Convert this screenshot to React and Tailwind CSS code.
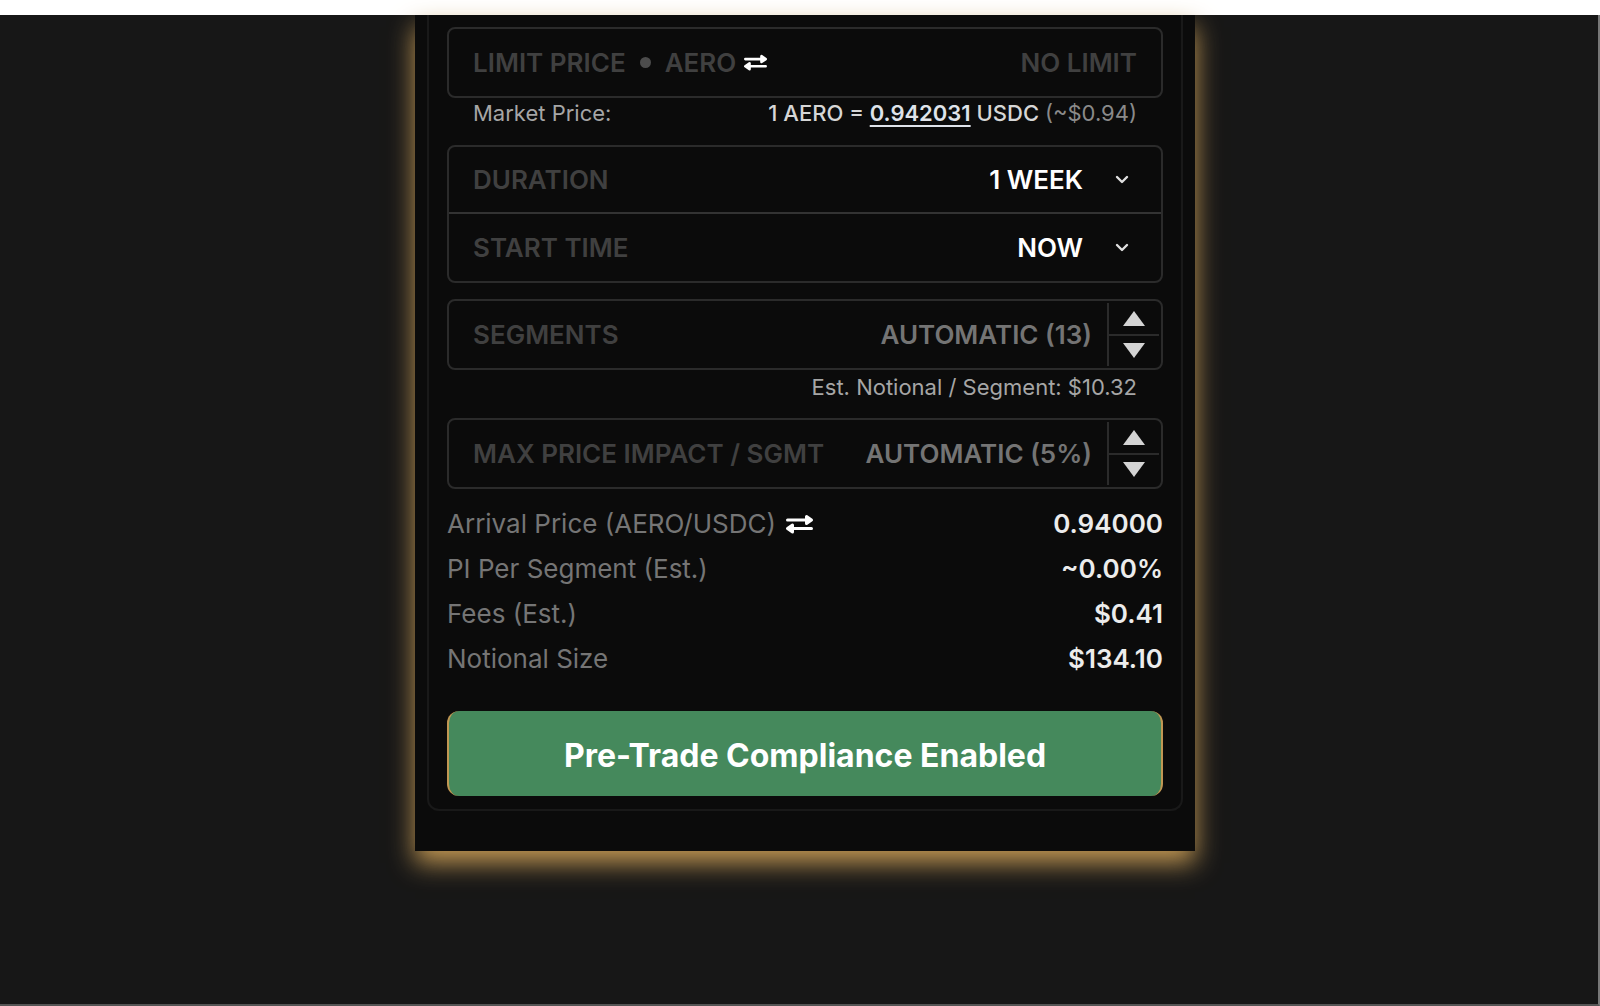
import { useState } from 'react';

const SwapIcon = ({ className }) => (
  <svg viewBox="0 0 27 20" className={className} fill="white" stroke="white" strokeLinejoin="round" strokeLinecap="round" aria-hidden="true">
    <path d="M1.5 6H20M7 14.5h18.5" strokeWidth="3" />
    <path d="M20.5 2.5v7l5-3.5zM6.5 11v7l-5-3.5z" strokeWidth="3" />
  </svg>
);

const Chevron = () => (
  <svg viewBox="0 0 14 9" className="pointer-events-none absolute right-8 h-[9px] w-3.5" fill="none" stroke="#e0e0e0" strokeWidth="2.4" strokeLinecap="round" strokeLinejoin="round" aria-hidden="true">
    <path d="M2 2l5 5 5-5" />
  </svg>
);

const SelectRow = ({ id, label, options }) => (
  <div className="relative flex h-[67px] items-center justify-between">
    <label htmlFor={id} className="pl-6 text-[#404040]">{label}</label>
    <select
      id={id}
      className="h-full grow appearance-none bg-transparent pr-[78px] text-right text-white outline-none [text-align-last:right]"
    >
      {options.map((option) => (
        <option key={option} className="bg-[#0b0b0b]">{option}</option>
      ))}
    </select>
    <Chevron />
  </div>
);

const StepperField = ({ id, label, auto, className = '' }) => {
  const [value, setValue] = useState('');
  const step = (by) => setValue((current) => String(Math.max(0, Number(current || 0) + by)));

  return (
    <div className={`flex h-[71px] items-center rounded-lg border-2 border-[#2b2b2b] ${className}`}>
      <label htmlFor={id} className="shrink-0 pl-6 whitespace-nowrap text-[#404040]">{label}</label>
      <input
        id={id}
        value={value}
        placeholder={auto}
        onChange={(event) => setValue(event.target.value)}
        className="h-full w-0 grow bg-transparent pr-[15px] text-right text-white outline-none placeholder:text-[#747474]"
      />
      <div className="mr-0.5 flex h-[63px] w-[52px] flex-col border-l-2 border-[#2b2b2b]">
        <button type="button" aria-label={`Increase ${label}`} onClick={() => step(1)} className="flex grow items-center justify-center border-b-2 border-[#2b2b2b]">
          <svg viewBox="0 0 22 15" className="h-[15px] w-[22px]" fill="#d4d4d4"><path d="M11 0l11 15H0z" /></svg>
        </button>
        <button type="button" aria-label={`Decrease ${label}`} onClick={() => step(-1)} className="flex grow items-center justify-center">
          <svg viewBox="0 0 22 15" className="h-[15px] w-[22px]" fill="#d4d4d4"><path d="M0 0h22L11 15z" /></svg>
        </button>
      </div>
    </div>
  );
};

const SUMMARY = [
  { label: 'Arrival Price (AERO/USDC)', value: '0.94000', swap: true },
  { label: 'PI Per Segment (Est.)', value: '~0.00%' },
  { label: 'Fees (Est.)', value: '$0.41' },
  { label: 'Notional Size', value: '$134.10' },
];

const App = () => (
  <div className="flex min-h-screen flex-col bg-white pt-[15px] font-['Inter',sans-serif]">
    <main className="grow border-r-2 border-b-2 border-r-[#777] border-b-[#555] bg-[#171717] pl-3">
      <div className="mx-auto w-full max-w-[780px] bg-[#0b0b0b] px-3 pb-10 shadow-[0_12px_24px_#c19753]">
        <form
          onSubmit={(event) => event.preventDefault()}
          className="rounded-b-xl border-2 border-t-0 border-[#191919] px-[18px] pt-3 pb-[13px] text-[26px] leading-8 font-semibold"
        >
          <div className="flex h-[71px] items-center rounded-lg border-2 border-[#2b2b2b] px-6">
            <label htmlFor="limit" className="flex shrink-0 items-center text-[#404040]">
              LIMIT PRICE
              <span className="mx-3.5 size-[11px] rounded-full bg-[#4c4c4c]"></span>
              AERO
            </label>
            <button type="button" aria-label="Swap limit price" className="ml-2">
              <SwapIcon className="h-[17px] w-[23px]" />
            </button>
            <input id="limit" placeholder="NO LIMIT" className="h-full w-0 grow bg-transparent text-right text-white outline-none placeholder:text-[#404040]" />
          </div>

          <div className="flex h-[47px] justify-between px-[26px] text-[22px] leading-[30px] font-normal text-[#a6a6a6]">
            <span>Market Price:</span>
            <span className="font-medium text-[#d6d6d6]">
              1 AERO ={' '}
              <a href="#market" className="font-semibold text-[#dfe3ea] underline decoration-2 underline-offset-4">0.942031</a>
              {' '}USDC <span className="font-normal text-[#8a8a8a]">(~$0.94)</span>
            </span>
          </div>

          <div className="divide-y-2 divide-[#333] rounded-lg border-2 border-[#2b2b2b]">
            <SelectRow id="duration" label="DURATION" options={['1 WEEK', '1 MONTH']} />
            <SelectRow id="start" label="START TIME" options={['NOW', 'LATER']} />
          </div>

          <StepperField id="segments" label="SEGMENTS" auto="AUTOMATIC (13)" className="mt-4" />
          <p className="h-12 px-[26px] text-right text-[22px] leading-[34px] font-normal text-[#a6a6a6]">
            Est. Notional / Segment: $10.32
          </p>
          <StepperField id="impact" label="MAX PRICE IMPACT / SGMT" auto="AUTOMATIC (5%)" />

          <dl className="mt-3 flex flex-col">
            {SUMMARY.map((row) => (
              <div key={row.label} className="flex h-[45px] items-center justify-between">
                <dt className="flex items-center font-normal text-[#757575]">
                  {row.label}
                  {row.swap && (
                    <button type="button" aria-label="Swap arrival price" className="ml-2.5">
                      <SwapIcon className="h-5 w-[27px]" />
                    </button>
                  )}
                </dt>
                <dd className="text-[#ececec]">{row.value}</dd>
              </div>
            ))}
          </dl>

          <button type="submit" className="mt-[30px] h-[85px] w-full rounded-xl border-x-2 border-[#c19753] bg-[#45895c] pt-1 text-[32px] font-bold text-white">
            Pre-Trade Compliance Enabled
          </button>
        </form>
      </div>
    </main>
  </div>
);

export default App;
